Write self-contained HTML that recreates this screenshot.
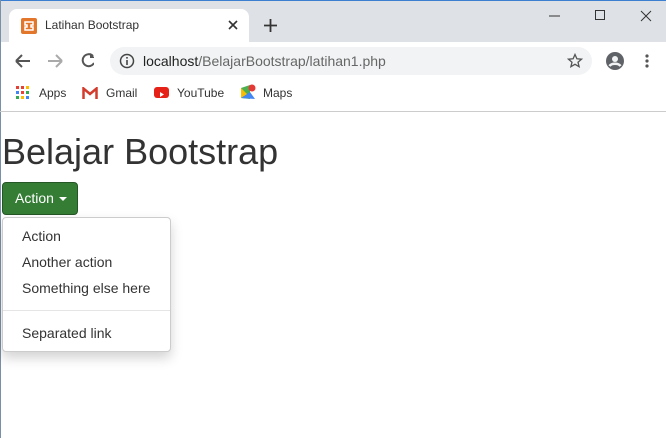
<!DOCTYPE html>
<html><head><style>
*{margin:0;padding:0;box-sizing:border-box}
body{width:666px;height:438px;overflow:hidden;background:#fff;font-family:"Liberation Sans",sans-serif;position:relative}
.a{position:absolute}
</style></head><body>
<div class="a" style="left:0;top:0;width:666px;height:42px;background:#dee1e6;border-top:1px solid #3c7fd0"></div>
<div class="a" style="left:0;top:0;width:1px;height:438px;background:#7a8fa8"></div>
<div class="a" style="left:9px;top:9px;width:240px;height:34px;background:#fff;border-radius:8px 8px 0 0"></div>
<div class="a" style="left:21px;top:18px;width:16px;height:16px;background:#e2762b;border-radius:2px"><svg width="16" height="16"><path d="M4 4h8v3h-2v2h2v3H4V9h2V7H4z" fill="none" stroke="#fff" stroke-width="1.5"/></svg></div>
<div class="a" style="left:45px;top:18px;font-size:12px;color:#333">Latihan Bootstrap</div>
<svg class="a" style="left:228px;top:20px" width="10" height="10"><path d="M1 1L9 9M9 1L1 9" stroke="#333" stroke-width="1.6"/></svg>
<svg class="a" style="left:264px;top:19px" width="13" height="13"><path d="M6.5 0v13M0 6.5h13" stroke="#333" stroke-width="1.8"/></svg>
<svg class="a" style="left:548px;top:10px" width="110" height="12"><path d="M1 6h11" stroke="#333"/><rect x="47.5" y="0.5" width="9" height="9" fill="none" stroke="#333"/><path d="M93 1l10 10M103 1L93 11" stroke="#333"/></svg>
<svg class="a" style="left:14px;top:52px" width="80" height="18"><path d="M2 9h14M2 9l6-6M2 9l6 6" stroke="#555" stroke-width="2" fill="none"/><path d="M48 9H34M48 9l-6-6M48 9l-6 6" stroke="#aaa" stroke-width="2" fill="none"/><path d="M80 4A6 6 0 1 0 81 11" transform="translate(-1 0)" stroke="#555" stroke-width="2" fill="none"/><path d="M76 1v5h5" fill="#555" stroke="none"/></svg>
<div class="a" style="left:110px;top:47px;width:482px;height:28px;background:#f1f3f4;border-radius:14px"></div>
<svg class="a" style="left:119px;top:53px" width="16" height="16"><circle cx="8" cy="8" r="6.5" fill="none" stroke="#444" stroke-width="1.5"/><path d="M8 7v5M8 4v1.6" stroke="#444" stroke-width="1.6"/></svg>
<div class="a" style="left:143px;top:53px;font-size:14px;color:#222">localhost<span style="color:#666">/BelajarBootstrap/latihan1.php</span></div>
<svg class="a" style="left:567px;top:53px" width="16" height="16"><path d="M8 1.5l1.9 4.3 4.6.4-3.5 3 1.1 4.5L8 11.3l-4.1 2.4 1.1-4.5-3.5-3 4.6-.4z" fill="none" stroke="#555" stroke-width="1.3"/></svg>
<svg class="a" style="left:605px;top:51px" width="20" height="20"><circle cx="10" cy="10" r="9" fill="#5f6368"/><circle cx="10" cy="8" r="3" fill="#f1f3f4"/><path d="M4.5 15c2-3 9-3 11 0" stroke="#f1f3f4" stroke-width="2.5" fill="none"/></svg>
<svg class="a" style="left:644px;top:54px" width="6" height="16"><circle cx="3" cy="2" r="1.6" fill="#555"/><circle cx="3" cy="7" r="1.6" fill="#555"/><circle cx="3" cy="12" r="1.6" fill="#555"/></svg>
<svg class="a" style="left:16px;top:86px" width="14" height="14"><rect x="0" y="0" width="3" height="3" fill="#e34133"/><rect x="5" y="0" width="3" height="3" fill="#e34133"/><rect x="10" y="0" width="3" height="3" fill="#fbbc04"/><rect x="0" y="5" width="3" height="3" fill="#4285f4"/><rect x="5" y="5" width="3" height="3" fill="#ea4335"/><rect x="10" y="5" width="3" height="3" fill="#34a853"/><rect x="0" y="10" width="3" height="3" fill="#34a853"/><rect x="5" y="10" width="3" height="3" fill="#fbbc04"/><rect x="10" y="10" width="3" height="3" fill="#4285f4"/></svg>
<div class="a" style="left:39px;top:86px;font-size:12px;color:#333">Apps</div>
<svg class="a" style="left:82px;top:87px" width="16" height="12"><path d="M1.5 12V1.5L8 7l6.5-5.5V12" fill="none" stroke="#d33b2c" stroke-width="2.5"/></svg>
<div class="a" style="left:106px;top:86px;font-size:12px;color:#333">Gmail</div>
<div class="a" style="left:154px;top:87px;width:15px;height:11px;background:#e62117;border-radius:3px"><svg width="15" height="11"><path d="M6 3l4 2.5L6 8z" fill="#fff"/></svg></div>
<div class="a" style="left:177px;top:86px;font-size:12px;color:#333">YouTube</div>
<svg class="a" style="left:240px;top:84px" width="16" height="16"><path d="M1 4l9-3v14l-9-1z" fill="#4caf50"/><path d="M1 14l9-6 5 7z" fill="#4285f4"/><path d="M1 4l6 6-6 4z" fill="#fbbc04"/><circle cx="12" cy="4" r="3.5" fill="#e53935"/></svg>
<div class="a" style="left:263px;top:86px;font-size:12px;color:#333">Maps</div>
<div class="a" style="left:0;top:111px;width:666px;height:1px;background:#ccc"></div>
<div class="a" style="left:2px;top:130px;font-size:36px;color:#333;line-height:44px">Belajar Bootstrap</div>
<div class="a" style="left:2px;top:182px;width:76px;height:33px;background:#357d35;border:1px solid #255625;border-radius:4px;color:#fff;font-size:14px;line-height:31px;padding-left:12px">Action <span style="display:inline-block;border-left:4px solid transparent;border-right:4px solid transparent;border-top:4px solid #fff;vertical-align:middle;margin-left:1px"></span></div>
<div class="a" style="left:2px;top:217px;width:169px;height:135px;background:#fff;border:1px solid #ccc;border-radius:4px;box-shadow:0 6px 12px rgba(0,0,0,.175);font-size:14px;color:#333">
<div class="a" style="left:19px;top:10px">Action</div>
<div class="a" style="left:19px;top:36px">Another action</div>
<div class="a" style="left:19px;top:62px">Something else here</div>
<div class="a" style="left:0;top:92px;width:167px;height:1px;background:#e5e5e5"></div>
<div class="a" style="left:19px;top:107px">Separated link</div>
</div>
</body></html>
